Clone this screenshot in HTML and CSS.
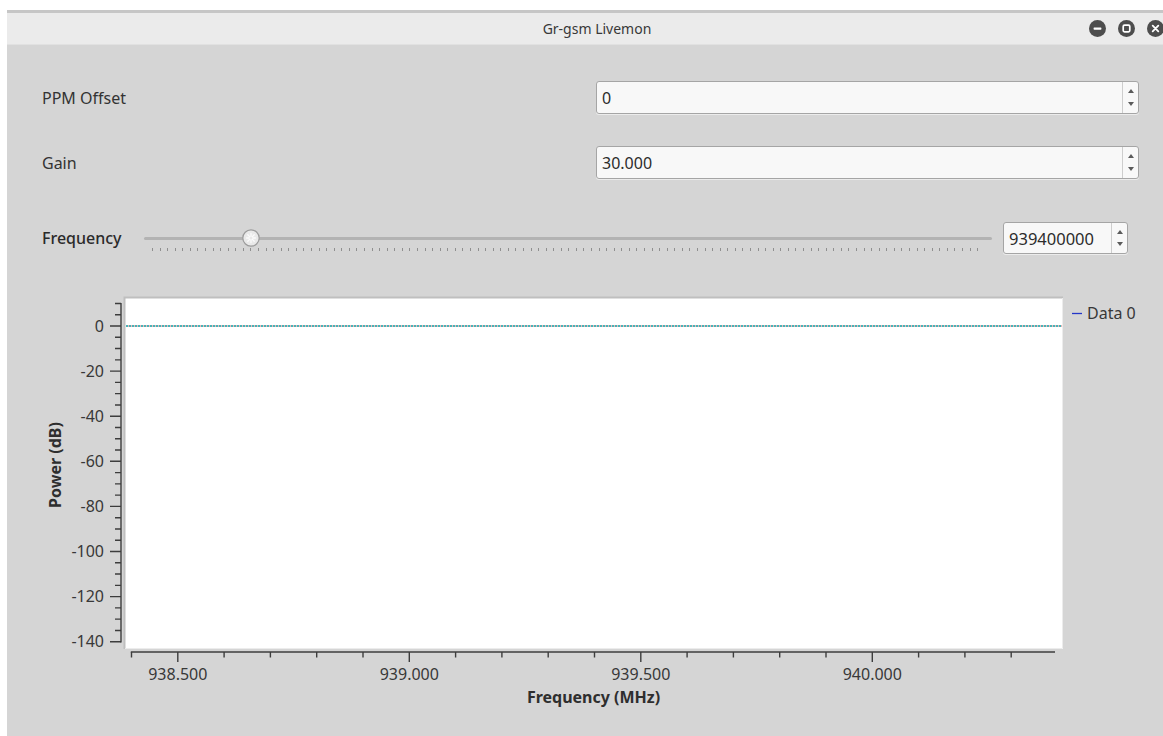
FILE: index.html
```html
<!DOCTYPE html>
<html lang="en">
<head>
<meta charset="utf-8">
<title>Gr-gsm Livemon</title>
<link rel="stylesheet" href="styles.css">
</head>
<body>
<div class="window">
  <header class="titlebar">
    <div class="titlebar-spacer"></div>
    <div class="title">Gr-gsm Livemon</div>
    <div class="wm-buttons">
      <span class="wm-btn" title="Minimize">
        <svg viewBox="0 0 17 17" width="17" height="17"><circle cx="8.5" cy="8.5" r="8.5" fill="#4d4d4d"/><rect x="4.6" y="7.4" width="7.8" height="2.3" rx="0.6" fill="#fff"/></svg>
      </span>
      <span class="wm-btn" title="Maximize">
        <svg viewBox="0 0 17 17" width="17" height="17"><circle cx="8.5" cy="8.5" r="8.5" fill="#4d4d4d"/><rect x="5.2" y="5.2" width="6.6" height="6.6" rx="1.3" fill="none" stroke="#fff" stroke-width="1.7"/></svg>
      </span>
      <span class="wm-btn" title="Close">
        <svg viewBox="0 0 17 17" width="17" height="17"><circle cx="8.5" cy="8.5" r="8.5" fill="#4d4d4d"/><path d="M5.7 5.7 L11.3 11.3 M11.3 5.7 L5.7 11.3" stroke="#fff" stroke-width="1.8" stroke-linecap="round"/></svg>
      </span>
    </div>
  </header>

  <main class="content">
    <div class="field-row">
      <span class="field-label">PPM Offset</span>
      <div class="spinbox">
        <span class="spin-value">0</span>
        <span class="spin-arrows"><i class="arrow-up"></i><i class="arrow-down"></i></span>
      </div>
    </div>

    <div class="field-row">
      <span class="field-label">Gain</span>
      <div class="spinbox">
        <span class="spin-value">30.000</span>
        <span class="spin-arrows"><i class="arrow-up"></i><i class="arrow-down"></i></span>
      </div>
    </div>

    <div class="slider-row">
      <span class="field-label slider-label">Frequency</span>
      <div class="slider">
        <div class="slider-track"></div>
        <div class="slider-ticks"></div>
        <span class="slider-handle" style="left: calc(12.6% - 9px)">
          <svg viewBox="0 0 18 18" width="18" height="18">
            <circle cx="9" cy="9" r="8.2" fill="#e9e9e9" stroke="#9b9b9b" stroke-width="1.2"/>
            <path d="M9 4.5 V7.2 M9 10.8 V13.5 M4.5 9 H7.2 M10.8 9 H13.5 M5.8 5.8 L7.6 7.6 M10.4 10.4 L12.2 12.2 M12.2 5.8 L10.4 7.6 M7.6 10.4 L5.8 12.2" stroke="#fbfbfb" stroke-width="1.3" stroke-linecap="round"/>
          </svg>
        </span>
      </div>
      <div class="spinbox compact">
        <span class="spin-value">939400000</span>
        <span class="spin-arrows"><i class="arrow-up"></i><i class="arrow-down"></i></span>
      </div>
    </div>

    <div class="plot">
      <svg class="plot-svg" viewBox="7 0 1104 424" width="1104" height="424">
        <!-- canvas -->
        <rect x="89" y="7" width="939" height="352" fill="#ffffff"/>
        <path d="M89.5 359 V7.5 H1028" fill="none" stroke="#bfbfbf" stroke-width="2"/>
        <path d="M1027.5 8 V358.5 H90" fill="none" stroke="#ececec" stroke-width="1"/>

        <!-- curve: Data 0 -->
        <line x1="91" y1="36" x2="1027" y2="36" stroke="#e06a6a" stroke-width="1"/>
        <line x1="91" y1="36" x2="1027" y2="36" stroke="#12b3b8" stroke-width="1.3" stroke-dasharray="2 1"/>

        <!-- left axis -->
        <g stroke="#3d3d3d" stroke-width="1.4" fill="none">
          <path d="M86 13 V352.4"/>
          <path d="M75 36 H86 M75 81.1 H86 M75 126.2 H86 M75 171.3 H86 M75 216.4 H86 M75 261.5 H86 M75 306.6 H86 M75 351.7 H86"/>
          <path d="M80 13.45 H86 M80 24.73 H86 M80 47.28 H86 M80 58.55 H86 M80 69.83 H86 M80 92.38 H86 M80 103.65 H86 M80 114.93 H86 M80 137.48 H86 M80 148.75 H86 M80 160.03 H86 M80 182.58 H86 M80 193.85 H86 M80 205.13 H86 M80 227.68 H86 M80 238.95 H86 M80 250.23 H86 M80 272.78 H86 M80 284.05 H86 M80 295.33 H86 M80 317.88 H86 M80 329.15 H86 M80 340.43 H86"/>
        </g>
        <g class="tick-label" text-anchor="end">
          <text x="69" y="41.6">0</text>
          <text x="69" y="86.7">-20</text>
          <text x="69" y="131.8">-40</text>
          <text x="69" y="176.9">-60</text>
          <text x="69" y="222">-80</text>
          <text x="69" y="267.1">-100</text>
          <text x="69" y="312.2">-120</text>
          <text x="69" y="357.3">-140</text>
        </g>
        <text class="axis-title" transform="translate(26 175) rotate(-90)" text-anchor="middle">Power (dB)</text>

        <!-- bottom axis -->
        <g stroke="#3d3d3d" stroke-width="1.4" fill="none">
          <path d="M95.8 362 H1020"/>
          <path d="M142.8 362 V372 M374.3 362 V372 M605.8 362 V372 M837.3 362 V372"/>
          <path d="M96.5 362 V367.5 M189.1 362 V367.5 M235.4 362 V367.5 M281.7 362 V367.5 M328 362 V367.5 M420.6 362 V367.5 M466.9 362 V367.5 M513.2 362 V367.5 M559.5 362 V367.5 M652.1 362 V367.5 M698.4 362 V367.5 M744.7 362 V367.5 M791 362 V367.5 M883.6 362 V367.5 M929.9 362 V367.5 M976.2 362 V367.5"/>
        </g>
        <g class="tick-label" text-anchor="middle">
          <text x="142.8" y="390">938.500</text>
          <text x="374.3" y="390">939.000</text>
          <text x="605.8" y="390">939.500</text>
          <text x="837.3" y="390">940.000</text>
        </g>
        <text class="axis-title" x="558.5" y="413" text-anchor="middle">Frequency (MHz)</text>

        <!-- legend -->
        <line x1="1037" y1="23.5" x2="1047" y2="23.5" stroke="#2436c8" stroke-width="1.3"/>
        <text class="legend-label" x="1052" y="29.2">Data 0</text>
      </svg>
    </div>
  </main>
</div>
</body>
</html>
```

FILE: styles.css
```css
* {
  box-sizing: border-box;
}

html,
body {
  margin: 0;
  height: 100%;
}

body {
  background: #ffffff;
  overflow: hidden;
  font-family: "Noto Sans", "DejaVu Sans", sans-serif;
  color: #2f2f2f;
}

/* Application window */
.window {
  margin: 10px 0 0 7px;
  width: 1180px;
  height: 726px;
  background: #d5d5d5;
  display: flex;
  flex-direction: column;
}

.titlebar {
  flex: none;
  height: 35px;
  border-top: 3px solid #c6c6c6;
  border-bottom: 1px solid #e1e1e1;
  background: #ebebeb;
  display: grid;
  grid-template-columns: 1fr auto 1fr;
  align-items: center;
}

.title {
  font-size: 14px;
  color: #383838;
  white-space: nowrap;
}

.wm-buttons {
  justify-self: end;
  display: flex;
  gap: 12px;
  padding-right: 23px;
}

.wm-btn {
  display: block;
  width: 17px;
  height: 17px;
}

.wm-btn svg {
  display: block;
}

/* Form area */
.content {
  flex: 1;
  padding: 36px 48px 0 35px;
  display: flex;
  flex-direction: column;
}

.field-row {
  display: grid;
  grid-template-columns: 1fr 543px;
  align-items: center;
  height: 33px;
}

.field-row + .field-row {
  margin-top: 32px;
}

.field-label {
  font-size: 16px;
  color: #333333;
  white-space: nowrap;
}

.spinbox {
  display: flex;
  height: 33px;
  background: #f8f8f8;
  border: 1px solid #a5a5a5;
  border-radius: 3px;
  box-shadow: 0 1px 0 rgba(255, 255, 255, 0.55);
}

.spin-value {
  flex: 1;
  display: flex;
  align-items: center;
  padding-left: 5px;
  font-size: 16px;
  color: #2c2c2c;
}

.spin-arrows {
  flex: none;
  width: 16px;
  border-left: 1px solid #cdcdcd;
  display: flex;
  flex-direction: column;
  align-items: center;
  justify-content: space-between;
  padding: 7px 0 7px;
}

.arrow-up,
.arrow-down {
  display: block;
  width: 0;
  height: 0;
  border-left: 3px solid transparent;
  border-right: 3px solid transparent;
}

.arrow-up {
  border-bottom: 4px solid #5a5a5a;
}

.arrow-down {
  border-top: 4px solid #5a5a5a;
}

/* Frequency slider row */
.slider-row {
  display: grid;
  grid-template-columns: 91px 1fr 125px;
  column-gap: 11px;
  align-items: center;
  margin-top: 43px;
  margin-right: 11px;
  height: 32px;
}

.slider-label {
  color: #2a2a2a;
  font-weight: 500;
}

.slider {
  position: relative;
  height: 32px;
  padding-top: 15px;
}

.slider-track {
  height: 3px;
  border-radius: 2px;
  background: #b3b3b3;
}

.slider-ticks {
  height: 3px;
  margin: 8px 14px 0 8px;
  background: repeating-linear-gradient(to right, #8f8f8f 0 1px, transparent 1px 7.57px);
}

.slider-handle {
  position: absolute;
  top: 7px;
  width: 18px;
  height: 18px;
}

.slider-handle svg {
  display: block;
}

.spinbox.compact {
  height: 32px;
}

.spinbox.compact .spin-value {
  font-size: 16.5px;
  padding-left: 5px;
}

/* Power spectrum plot */
.plot {
  margin-top: 36px;
}

.plot-svg {
  display: block;
  overflow: visible;
}

.tick-label text {
  font-family: "Noto Sans", "DejaVu Sans", sans-serif;
  font-size: 16px;
  fill: #383838;
}

.axis-title {
  font-family: "Noto Sans", "DejaVu Sans", sans-serif;
  font-size: 16px;
  font-weight: 700;
  fill: #2e2e2e;
}

.legend-label {
  font-family: "Noto Sans", "DejaVu Sans", sans-serif;
  font-size: 16px;
  fill: #383838;
}
```
